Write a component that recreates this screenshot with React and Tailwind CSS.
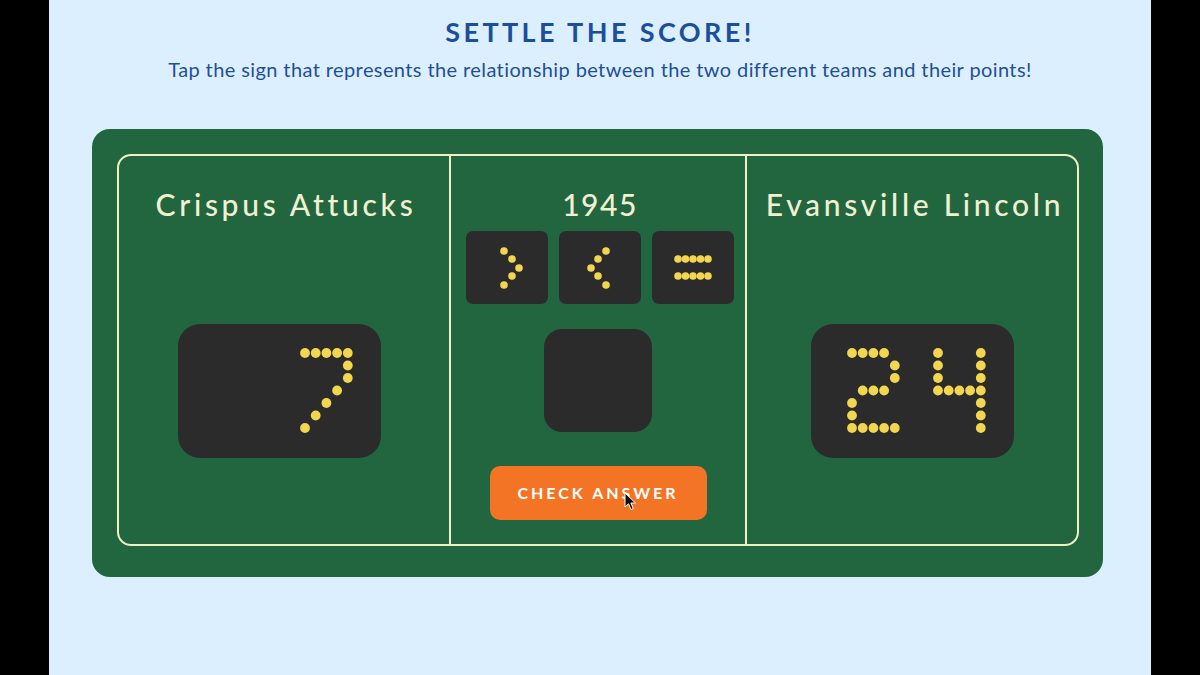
import React from 'react';

const DIGITS = {
    '2': ['11110', '00001', '00001', '01110', '10000', '10000', '11111'],
    '4': ['10001', '10001', '10001', '11111', '00001', '00001', '00001'],
    '7': ['11111', '00001', '00001', '00010', '00100', '01000', '10000'],
};

const DOT = '#f2d64f';

const ScoreBox = ({ value }) => {
    const text = String(value).padStart(2, ' ');
    const dots = [];
    text.split('').forEach((ch, d) => {
        const rows = DIGITS[ch];
        if (!rows) return;
        rows.forEach((row, r) => {
            row.split('').forEach((on, c) => {
                if (on === '1') {
                    dots.push(<circle key={`${d}-${r}-${c}`} cx={41 + c * 10.7 + d * 86} cy={29 + r * 12.5} r="4.9" fill={DOT} />);
                }
            });
        });
    });
    return (
        <div className="w-[203px] h-[134px] rounded-[22px] bg-[#2b2b2b]">
            <svg width="203" height="134">{dots}</svg>
        </div>
    );
};

const SignButton = ({ points }) => (
    <button className="w-[82px] h-[73px] rounded-[7px] bg-[#2b2b2b]">
        <svg width="82" height="73">
            {points.map(([x, y], i) => (
                <circle key={i} cx={x} cy={y} r="3.8" fill={DOT} />
            ))}
        </svg>
    </button>
);

const GT = [[38, 20], [46, 28], [53, 37], [46, 45], [38, 54]];
const LT = [[47, 20], [39, 28], [32, 37], [39, 45], [47, 54]];
const EQ = [26, 33.5, 41, 48.5, 56].flatMap((x) => [[x, 28], [x, 45]]);

const Cursor = () => (
    <svg className="absolute left-[134px] top-[26px]" width="14" height="20" viewBox="0 0 14 20">
        <path d="M1 1 L1 15 L4.5 11.8 L7 17.5 L9.3 16.5 L6.9 11 L11.5 11 Z" fill="#111" stroke="#fff" strokeWidth="1" strokeLinejoin="round" />
    </svg>
);

const App = () => {
    return (
        <div className="w-[1200px] h-[675px] bg-black flex justify-center" style={{ fontFamily: 'Lato, "Open Sans", sans-serif' }}>
            <div className="w-[1102px] h-full bg-[#dcefff] flex flex-col items-center">
                <h1 className="mt-[16px] text-[27px] leading-[32px] font-bold tracking-[3.4px] text-[#1c4f9b]">SETTLE THE SCORE!</h1>
                <p className="mt-[9px] text-[20px] leading-[24px] tracking-[0.4px] text-[#1f4f97]">
                    Tap the sign that represents the relationship between the two different teams and their points!
                </p>

                <div className="mt-[48px] self-start ml-[43px] w-[1011px] h-[448px] rounded-[18px] bg-[#226640] pt-[25px] px-[25px]">
                    <div className="h-[392px] w-[962px] border-2 border-[#eff0c4] rounded-[14px] flex text-[#f1f0d2]">
                        <div className="w-[330px] flex flex-col items-center pt-[32px]">
                            <h2 className="ml-[4px] text-[30px] leading-[32px] font-medium tracking-[3.7px]">Crispus Attucks</h2>
                            <div className="mt-[104px] mr-[10px]">
                                <ScoreBox value={7} />
                            </div>
                        </div>

                        <div className="w-[298px] border-x-2 border-[#eff0c4] flex flex-col items-center pt-[32px]">
                            <h2 className="ml-[4px] text-[30px] leading-[32px] font-medium tracking-[1.5px]">1945</h2>
                            <div className="mt-[11px] ml-[4px] flex gap-[11px]">
                                <SignButton points={GT} />
                                <SignButton points={LT} />
                                <SignButton points={EQ} />
                            </div>
                            <div className="mt-[25px] w-[108px] h-[103px] rounded-[18px] bg-[#2b2b2b]" />
                            <div className="relative mt-[34px]">
                                <button className="w-[217px] h-[54px] rounded-[10px] bg-[#f47426] text-white text-[16px] font-bold tracking-[3px]">
                                    CHECK ANSWER
                                </button>
                                <Cursor />
                            </div>
                        </div>

                        <div className="flex-1 flex flex-col items-center pt-[32px]">
                            <h2 className="ml-[6px] text-[30px] leading-[32px] font-medium tracking-[3.7px]">Evansville Lincoln</h2>
                            <div className="mt-[104px]">
                                <ScoreBox value={24} />
                            </div>
                        </div>
                    </div>
                </div>
            </div>
        </div>
    );
};

export default App;
